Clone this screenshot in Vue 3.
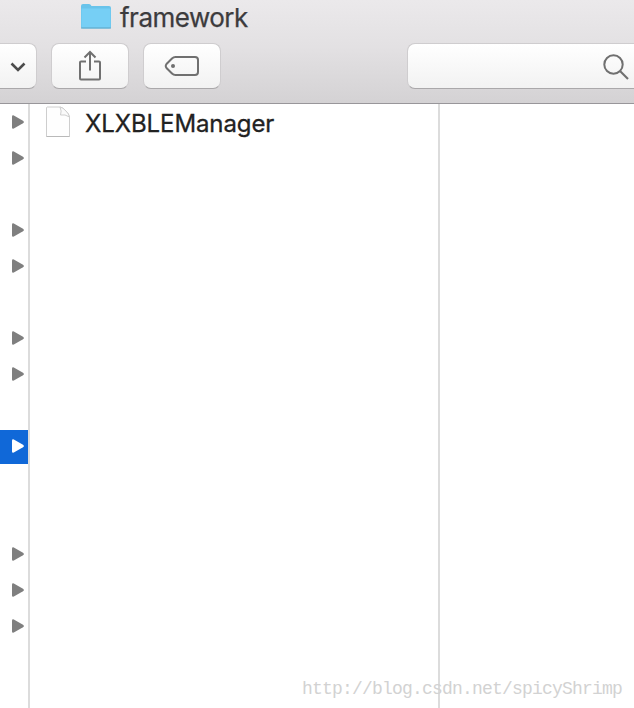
<script setup>
import { ref } from 'vue';

const title = ref('framework');
const files = ref([{ id: 1, name: 'XLXBLEManager' }]);

// rows of the left column, only folders have an arrow
const folderRows = [1, 2, 4, 5, 7, 8, 10, 13, 14, 15];
const selectedRow = ref(10);
const rowCount = 16;
</script>

<template>
  <div class="finder">
    <header class="toolbar">
      <div class="title">
        <svg class="folder" width="32" height="27" viewBox="0 0 32 27">
          <path d="M1 3Q1 1 3 1H9Q10.500 1 11.500 3H29Q31 3 31 5V24Q31 25.500 29 25.500H3Q1 25.500 1 24Z" fill="#69c3ea" />
          <path d="M1.500 5.500H30.500V23.500Q30.500 24.500 29 24.500H3Q1.500 24.500 1.500 23.500Z" fill="#76cff5" />
          <path d="M1 25H31" stroke="#62a9c9" />
        </svg>
        <span class="title-text">{{ title }}</span>
      </div>
      <div class="tools">
        <button class="btn btn-menu">
          <svg width="16" height="10" viewBox="0 0 16 10">
            <path d="M1.500 1.500L8 8L14.500 1.500" fill="none" stroke="#4c4c4c" stroke-width="2.600" />
          </svg>
        </button>
        <button class="btn btn-share">
          <svg width="24" height="32" viewBox="0 0 24 32">
            <path d="M8 11.500H3Q2 11.500 2 12.500V28.500Q2 29.500 3 29.500H21Q22 29.500 22 28.500V12.500Q22 11.500 21 11.500H16M12 20.500V2M6.500 7.500L12 2L17.500 7.500" fill="none" stroke="#707070" stroke-width="2" />
          </svg>
        </button>
        <button class="btn btn-tag">
          <svg width="36" height="22" viewBox="0 0 36 22">
            <path d="M11.500 2H31Q34 2 34 5V17Q34 20 31 20H11.500Q9.500 20 8 18.500L2.500 13Q1 11 2.500 9L8 3.500Q9.500 2 11.500 2Z" fill="none" stroke="#707070" stroke-width="2" />
            <circle cx="9" cy="11" r="2" fill="#707070" />
          </svg>
        </button>
        <div class="search">
          <svg width="26" height="26" viewBox="0 0 26 26">
            <circle cx="10.500" cy="10.500" r="9.200" fill="none" stroke="#707070" stroke-width="2" />
            <path d="M17 17L25 25" stroke="#707070" stroke-width="2.200" />
          </svg>
        </div>
      </div>
    </header>
    <main class="columns">
      <ul class="column column-left">
        <li v-for="n in rowCount" :key="n" class="row" :class="{ selected: n === selectedRow }">
          <svg v-if="folderRows.includes(n)" width="12" height="14" viewBox="0 0 12 14">
            <path d="M0 1.500Q0 0 1.800 .4L11 5.700Q12.800 7 11 8.300L1.800 13.600Q0 14 0 12.500Z" fill="currentColor" />
          </svg>
        </li>
      </ul>
      <ul class="column column-files">
        <li v-for="file in files" :key="file.id" class="file">
          <svg width="26" height="32" viewBox="0 0 26 32">
            <path d="M2 1H15Q18 1.500 21 5Q24 8 24.500 11V30.500H1.500V1.500Z" fill="#fefefe" stroke="#cecece" />
            <path d="M15 1Q17 5 15.500 9Q20 8 24.500 11Q24 8 21 5Q18 1.500 15 1Z" fill="#fafafa" stroke="#cecece" />
            <path d="M1.500 30.500H24.500" stroke="#b9b9b9" />
          </svg>
          <span class="file-name">{{ file.name }}</span>
        </li>
      </ul>
      <div class="column preview"></div>
    </main>
    <div class="watermark">http://blog.csdn.net/spicyShrimp</div>
  </div>
</template>

<style>
body {
  margin: 0;
  overflow: hidden;
}
</style>

<style scoped>
.finder {
  position: relative;
  display: flex;
  flex-direction: column;
  width: 634px;
  height: 708px;
  overflow: hidden;
  background: #fff;
  font-family: Inter, 'Liberation Sans', sans-serif;
}
.toolbar {
  box-sizing: border-box;
  flex: none;
  height: 104px;
  background: linear-gradient(#ebe9eb, #e3e1e3 45%, #d4d2d4);
  border-bottom: 1px solid #98969a;
}
.title {
  display: flex;
  align-items: center;
  height: 34px;
  padding-left: 80px;
}
.folder {
  margin-top: -1px;
}
.title-text {
  margin-left: 8px;
  padding-top: 1px;
  font-size: 26px;
  line-height: 33px;
  letter-spacing: -0.5px;
  color: #3c3b3d;
  -webkit-text-stroke: 0.25px #3c3b3d;
}
.tools {
  display: flex;
  padding-top: 9px;
}
.btn,
.search {
  box-sizing: border-box;
  display: flex;
  align-items: center;
  height: 46px;
  padding: 0;
  border: 1px solid #cfcdcf;
  border-bottom-color: #aaa8aa;
  border-radius: 8px;
  background: linear-gradient(#fff, #f2f2f2);
}
.btn {
  justify-content: center;
  width: 78px;
  margin-right: 14px;
}
.btn-menu {
  width: 37px;
  border-left: 0;
  border-radius: 0 8px 8px 0;
}
.btn-menu svg {
  margin-top: 1px;
}
.search {
  flex: 1;
  justify-content: flex-end;
  margin-left: 172px;
  padding: 2px 5px 0 0;
  border-right: 0;
  border-radius: 8px 0 0 8px;
}
.columns {
  display: flex;
  flex: 1;
  min-height: 0;
}
.column {
  box-sizing: border-box;
  margin: 0;
  padding: 0;
  list-style: none;
  overflow: hidden;
}
.column-left {
  width: 30px;
  border-right: 2px solid #dcdcdc;
}
.row {
  display: flex;
  align-items: center;
  box-sizing: border-box;
  height: 34px;
  margin-top: 2px;
  padding: 0 0 2px 12px;
  color: #7f7f7f;
}
.selected {
  background: #1068d8;
  color: #fff;
}
.column-files {
  width: 410px;
  border-right: 2px solid #dcdcdc;
}
.file {
  display: flex;
  align-items: center;
  height: 36px;
  padding-left: 15px;
}
.file-name {
  margin-left: 14px;
  padding-top: 3px;
  font-size: 24px;
  line-height: 34px;
  letter-spacing: -0.1px;
  color: #222;
  -webkit-text-stroke: 0.3px #222;
}
.preview {
  flex: 1;
}
.watermark {
  position: absolute;
  left: 302px;
  top: 677px;
  font-family: 'Liberation Mono', monospace;
  font-size: 18px;
  line-height: 24px;
  letter-spacing: -0.8px;
  color: #d2d2d2;
  white-space: nowrap;
}
</style>
